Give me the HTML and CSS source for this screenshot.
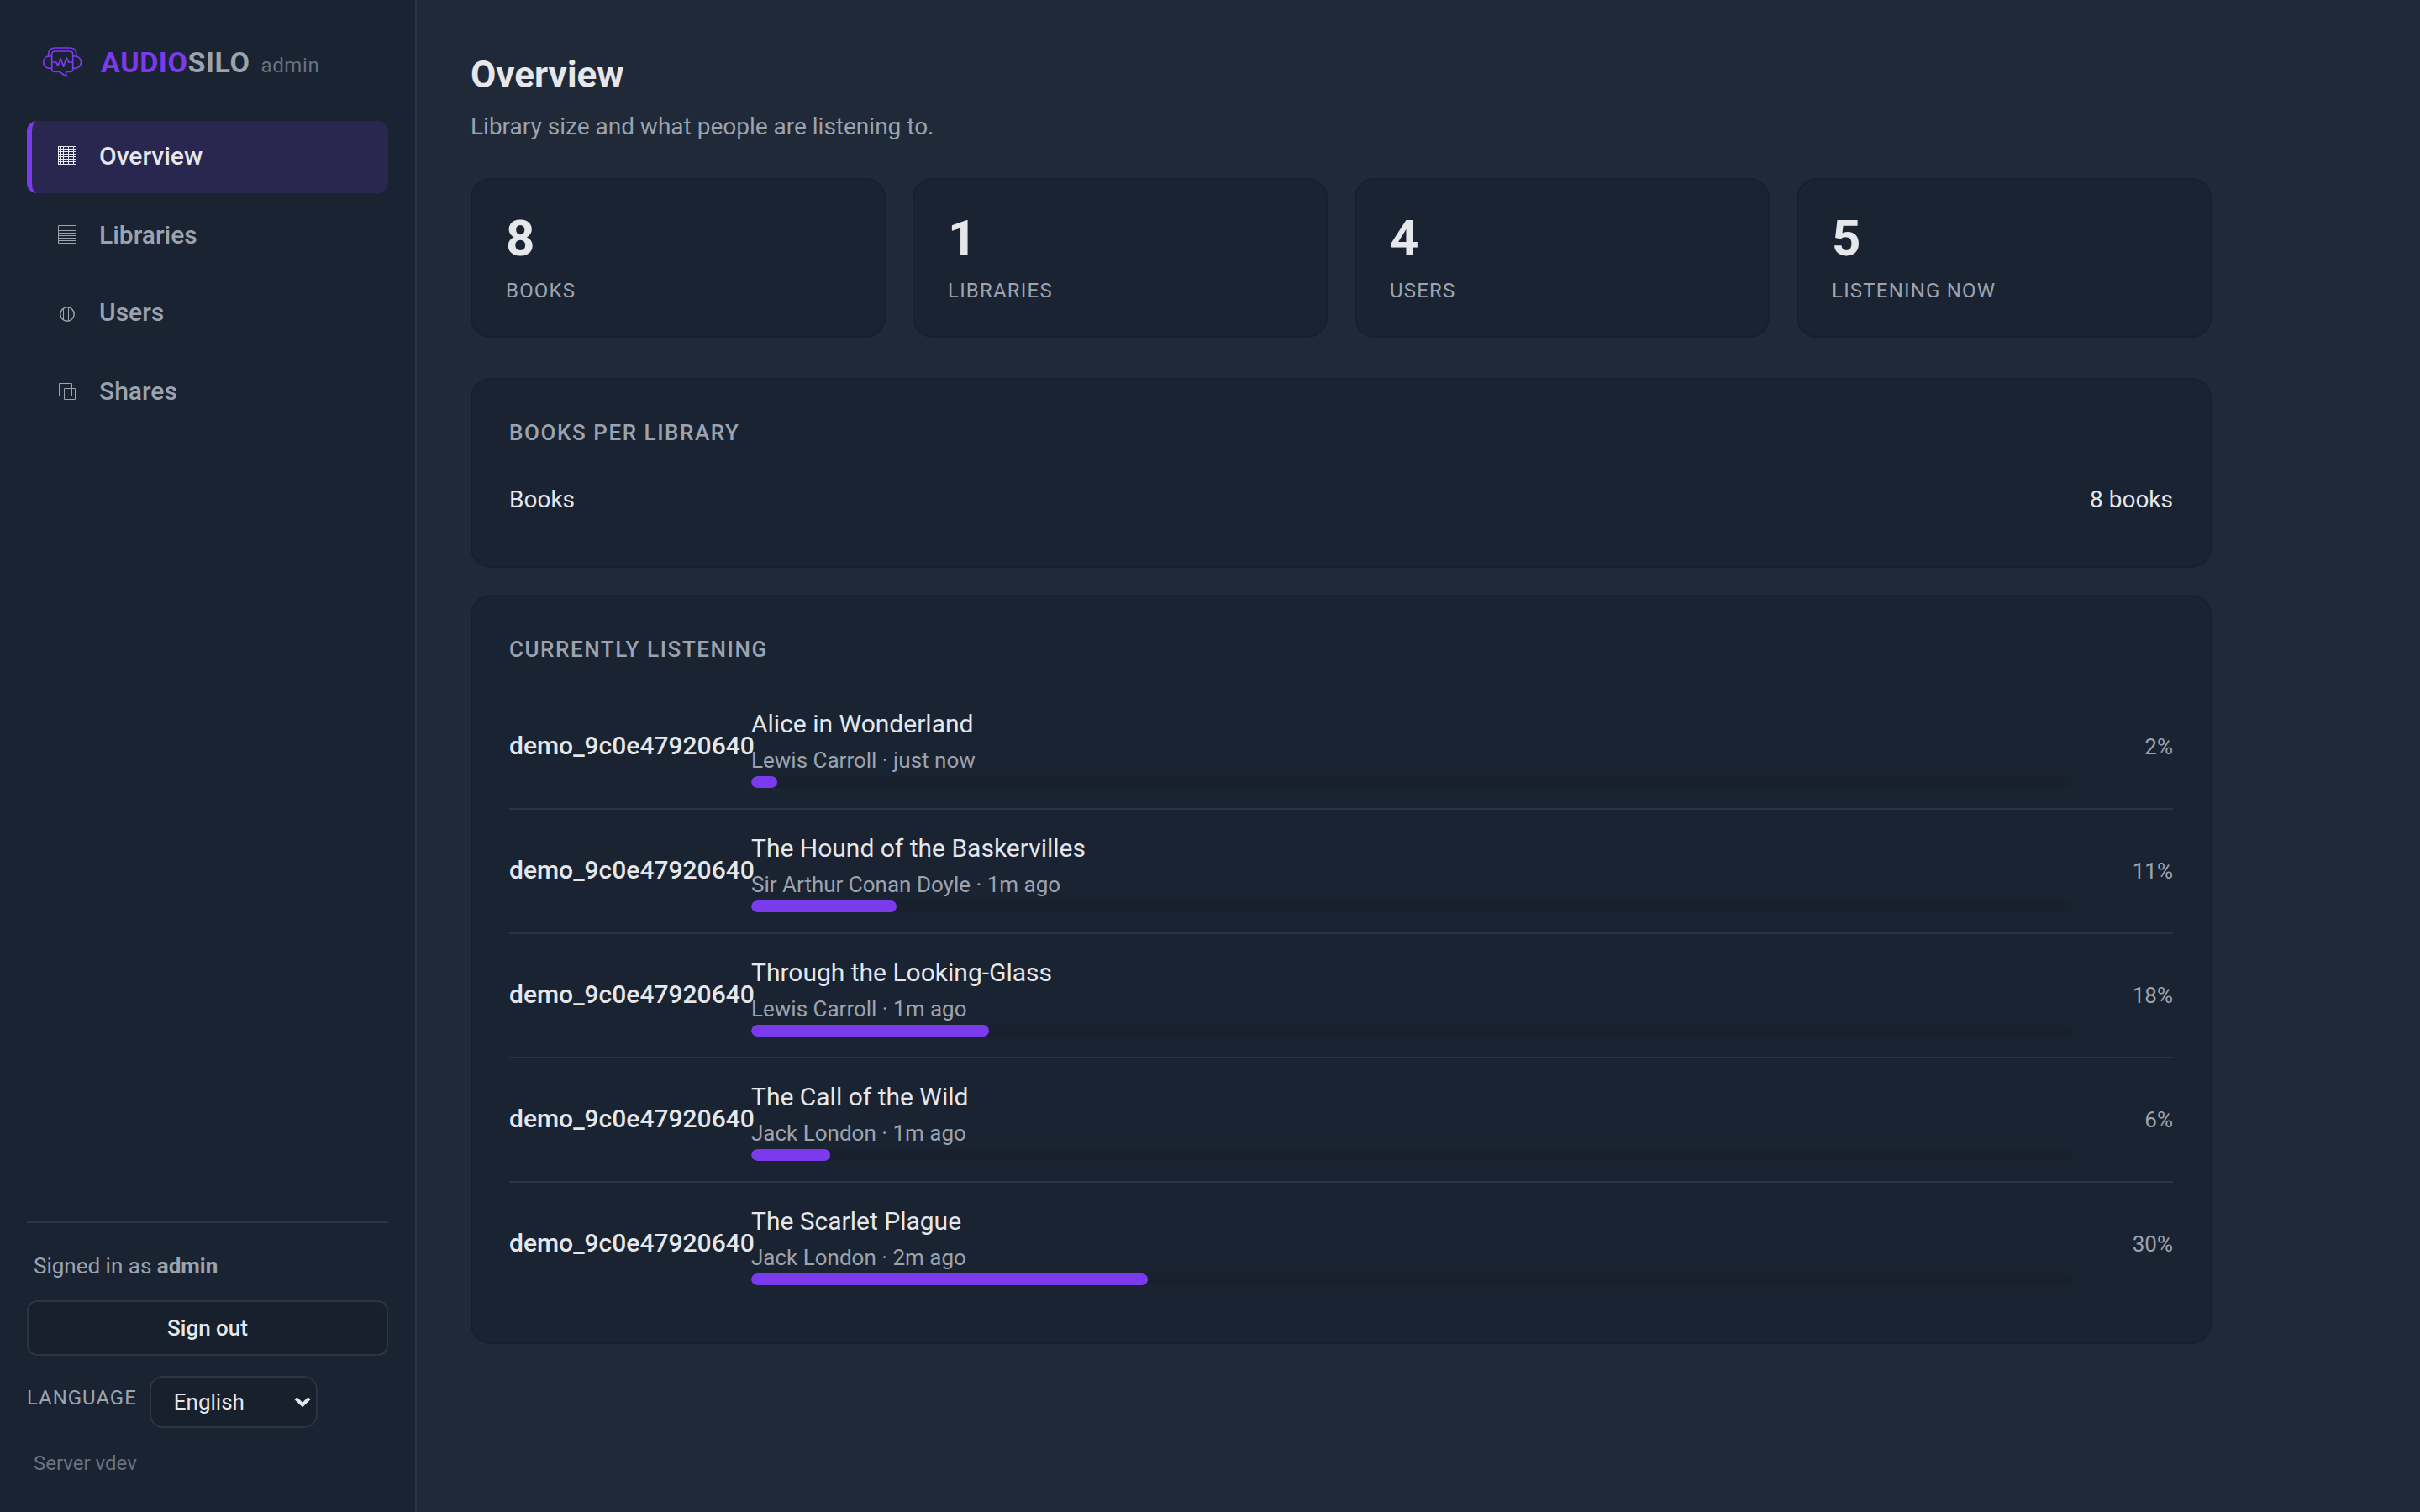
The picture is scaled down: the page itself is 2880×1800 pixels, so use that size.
FILE: index.html
```html
<!DOCTYPE html>
<html lang="en">
<head>
    <meta charset="UTF-8">
    <title>AudioSilo admin</title>
    <link rel="stylesheet" href="styles.css">
</head>
<body>
    <div class="layout">
        <aside class="sidebar">
            <div class="brand">
                <svg class="brand-logo" viewBox="0 0 52 42" fill="none" stroke="currentColor" stroke-width="1.7" stroke-linejoin="round">
                    <!-- headband -->
                    <path d="M9.500 14V12C9.500 7 12.500 4 17.500 4H35C40 4 43 7 43 12V14"/>
                    <!-- speech bubble -->
                    <path d="M17.500 8H35C37.500 8 38.700 9.500 38.700 11.500V29C38.700 31.500 37.500 32.500 35 32.500H30.700V38L23 32.500H17.500C15 32.500 13.700 31.500 13.700 29V11.500C13.700 9.500 15 8 17.500 8Z"/>
                    <!-- ear cups -->
                    <path d="M13.700 14H11C6.500 14 3.700 17 3.700 21S6.500 28.300 11 28.300H13.700"/>
                    <path d="M38.700 14H41C45.500 14 48.500 17 48.500 21S45.500 28.300 41 28.300H38.700"/>
                    <!-- waveform -->
                    <path d="M14 21H18.700L21 25.300L24.300 17L27.700 26.300L31 15.700L33.700 21H38.700"/>
                </svg>
                <div class="brand-name"><span class="accent">AUDIO</span>SILO <span class="brand-sub">admin</span></div>
            </div>

            <nav class="nav">
                <a class="nav-item active">
                    <svg class="nav-icon" viewBox="0 0 36 24"><path d="M7.500 1V23M10.500 1V23M13.500 1V23M16.500 1V23M19.500 1V23M22.500 1V23M25.500 1V23M28.500 1V23M7 1.500H29M7 4.500H29M7 7.500H29M7 10.500H29M7 13.500H29M7 16.500H29M7 19.500H29M7 22.500H29"/></svg>
                    Overview
                </a>
                <a class="nav-item">
                    <svg class="nav-icon" viewBox="0 0 36 24"><path d="M7.500 1.500H28.500V22.500H7.500ZM7 4.500H29M7 7.500H29M7 10.500H29M7 13.500H29M7 16.500H29M7 19.500H29"/></svg>
                    Libraries
                </a>
                <a class="nav-item users">
                    <svg class="nav-icon" viewBox="0 0 36 24"><circle cx="18" cy="15" r="8.200" stroke-width="1.5"/><path d="M13.500 8V22M16.500 7V23M19.500 7V23M22.500 8V22"/></svg>
                    Users
                </a>
                <a class="nav-item">
                    <svg class="nav-icon" viewBox="0 0 36 24"><path d="M8.500 3.500H23.500V18.500H8.500ZM14.500 9.500H27.500V22.500H14.500Z"/></svg>
                    Shares
                </a>
            </nav>

            <div class="sidebar-footer">
                <div class="signed-in">Signed in as <strong>admin</strong></div>
                <button class="sign-out">Sign out</button>
                <div class="language">
                    <label for="language">Language</label>
                    <div class="select-wrap">
                        <select id="language">
                            <option>English</option>
                        </select>
                        <svg class="chevron" viewBox="0 0 20 12"><path d="M2 1.800L10 9.500L18 1.800"/></svg>
                    </div>
                </div>
                <div class="version">Server vdev</div>
            </div>
        </aside>

        <main class="main">
            <h1>Overview</h1>
            <p class="subtitle">Library size and what people are listening to.</p>

            <div class="stats">
                <div class="stat">
                    <div class="stat-value">8</div>
                    <div class="stat-label">Books</div>
                </div>
                <div class="stat">
                    <div class="stat-value">1</div>
                    <div class="stat-label">Libraries</div>
                </div>
                <div class="stat">
                    <div class="stat-value">4</div>
                    <div class="stat-label">Users</div>
                </div>
                <div class="stat">
                    <div class="stat-value">5</div>
                    <div class="stat-label">Listening now</div>
                </div>
            </div>

            <section class="panel">
                <h2>Books per library</h2>
                <div class="library-row">
                    <span>Books</span>
                    <span>8 books</span>
                </div>
            </section>

            <section class="panel">
                <h2>Currently listening</h2>
                <div class="listen-row">
                    <div class="user">demo_9c0e47920640</div>
                    <div class="book">
                        <div class="title">Alice in Wonderland</div>
                        <div class="meta">Lewis Carroll · just now</div>
                        <div class="bar"><div class="fill" style="width: 2%"></div></div>
                    </div>
                    <div class="percent">2%</div>
                </div>
                <div class="listen-row">
                    <div class="user">demo_9c0e47920640</div>
                    <div class="book">
                        <div class="title">The Hound of the Baskervilles</div>
                        <div class="meta">Sir Arthur Conan Doyle · 1m ago</div>
                        <div class="bar"><div class="fill" style="width: 11%"></div></div>
                    </div>
                    <div class="percent">11%</div>
                </div>
                <div class="listen-row">
                    <div class="user">demo_9c0e47920640</div>
                    <div class="book">
                        <div class="title">Through the Looking-Glass</div>
                        <div class="meta">Lewis Carroll · 1m ago</div>
                        <div class="bar"><div class="fill" style="width: 18%"></div></div>
                    </div>
                    <div class="percent">18%</div>
                </div>
                <div class="listen-row">
                    <div class="user">demo_9c0e47920640</div>
                    <div class="book">
                        <div class="title">The Call of the Wild</div>
                        <div class="meta">Jack London · 1m ago</div>
                        <div class="bar"><div class="fill" style="width: 6%"></div></div>
                    </div>
                    <div class="percent">6%</div>
                </div>
                <div class="listen-row">
                    <div class="user">demo_9c0e47920640</div>
                    <div class="book">
                        <div class="title">The Scarlet Plague</div>
                        <div class="meta">Jack London · 2m ago</div>
                        <div class="bar"><div class="fill" style="width: 30%"></div></div>
                    </div>
                    <div class="percent">30%</div>
                </div>
            </section>
        </main>
    </div>
</body>
</html>
```

FILE: styles.css
```css
:root {
    --bg: #1f2937;
    --surface: #1a2332;
    --inset: #17202c;
    --card-border: #17202e;
    --line: #2a3442;
    --text: #e5e7eb;
    --muted: #9ca3af;
    --faint: #6b7280;
    --accent: #7c3aed;
}

* {
    box-sizing: border-box;
}

body {
    margin: 0;
    background: var(--bg);
    color: var(--text);
    font-family: Roboto, sans-serif;
    font-size: 30px;
    line-height: 1.5;
}

h1, h2, p {
    margin: 0;
}

.layout {
    display: flex;
    height: 1800px;
}

/* sidebar */
.sidebar {
    width: 496px;
    flex-shrink: 0;
    display: flex;
    flex-direction: column;
    padding: 48px 32px 40px;
    background: var(--surface);
    border-right: 2px solid var(--line);
}

.brand {
    display: flex;
    align-items: center;
    gap: 20px;
    height: 52px;
    padding-left: 16px;
    margin-bottom: 44px;
}

.brand-logo {
    width: 52px;
    height: 42px;
    color: var(--accent);
}

.brand-name {
    font-size: 34px;
    font-weight: 700;
    letter-spacing: 0.6px;
    color: var(--muted);
}

.accent {
    color: var(--accent);
}

.brand-sub {
    margin-left: 4px;
    font-size: 24px;
    font-weight: 400;
    color: var(--faint);
}

.nav {
    display: flex;
    flex-direction: column;
    gap: 8px;
}

.nav-item {
    display: flex;
    align-items: center;
    gap: 20px;
    height: 86px;
    padding: 0 24px 4px;
    border-left: 6px solid transparent;
    border-radius: 12px;
    color: var(--muted);
    font-weight: 500;
}

.nav-item.users {
    height: 84px;
    padding-bottom: 6px;
}

.nav-item.active {
    background: rgba(124, 58, 237, 0.16);
    border-left-color: var(--accent);
    color: var(--text);
}

.nav-icon {
    width: 36px;
    height: 24px;
    fill: none;
    stroke: currentColor;
    stroke-width: 1;
}

.sidebar-footer {
    margin-top: auto;
    padding-top: 32px;
    border-top: 2px solid var(--line);
    font-size: 26px;
}

.signed-in {
    padding-left: 8px;
    margin-bottom: 21px;
    color: var(--muted);
}

.sign-out {
    display: block;
    width: 100%;
    height: 66px;
    padding: 0;
    border: 2px solid var(--line);
    border-radius: 12px;
    background: var(--inset);
    color: var(--text);
    font: 500 26px Roboto, sans-serif;
}

.language {
    display: flex;
    gap: 15px;
    height: 62px;
    margin: 24px 0;
}

.language label {
    padding-top: 8px;
    font-size: 24px;
    letter-spacing: 0.96px;
    text-transform: uppercase;
    color: var(--muted);
}

.select-wrap {
    position: relative;
    width: 200px;
}

.select-wrap select {
    appearance: none;
    width: 100%;
    height: 62px;
    padding: 0 27px;
    border: 2px solid var(--line);
    border-radius: 16px;
    background: var(--inset);
    color: var(--text);
    font: 26px Roboto, sans-serif;
}

.chevron {
    position: absolute;
    right: 8px;
    top: 25px;
    width: 20px;
    height: 12px;
    fill: none;
    stroke: var(--text);
    stroke-width: 4;
    pointer-events: none;
}

.version {
    padding-left: 8px;
    font-size: 24px;
    color: var(--faint);
}

/* main column */
.main {
    width: 2200px;
    padding: 56px 64px;
}

h1 {
    font-size: 44px;
    font-weight: 700;
}

.subtitle {
    margin-top: 8px;
    font-size: 28px;
    color: var(--muted);
}

.stats {
    display: grid;
    grid-template-columns: repeat(4, 1fr);
    gap: 32px;
    margin: 40px 0 48px;
}

.stat {
    height: 190px;
    padding: 40px;
    background: var(--surface);
    border: 2px solid var(--card-border);
    border-radius: 24px;
}

.stat-value {
    font-size: 60px;
    font-weight: 700;
    line-height: 1;
}

.stat-label {
    margin-top: 14px;
    font-size: 24px;
    letter-spacing: 1.2px;
    text-transform: uppercase;
    color: var(--muted);
}

.panel {
    padding: 44px;
    margin-bottom: 32px;
    background: var(--surface);
    border: 2px solid var(--card-border);
    border-radius: 24px;
}

.panel h2 {
    margin-bottom: 23px;
    font-size: 26px;
    font-weight: 500;
    letter-spacing: 1.56px;
    text-transform: uppercase;
    color: var(--muted);
}

.library-row {
    display: flex;
    justify-content: space-between;
    padding: 16px 0 14px;
    font-size: 28px;
}

.listen-row {
    display: grid;
    grid-template-columns: 256px 1fr 88px;
    gap: 32px;
    align-items: center;
    padding: 24px 0;
    border-bottom: 2px solid var(--line);
}

.listen-row:last-child {
    border-bottom: none;
}

.user {
    padding-bottom: 3px;
    font-weight: 500;
    white-space: nowrap;
}

.title {
    margin-bottom: 3px;
    line-height: 43px;
}

.meta {
    font-size: 26px;
    line-height: 38px;
    color: var(--muted);
}

.bar {
    height: 14px;
    border-radius: 8px;
    background: var(--inset);
    overflow: hidden;
}

.fill {
    height: 100%;
    border-radius: 8px;
    background: var(--accent);
}

.percent {
    font-size: 26px;
    text-align: right;
    color: var(--muted);
}
```
